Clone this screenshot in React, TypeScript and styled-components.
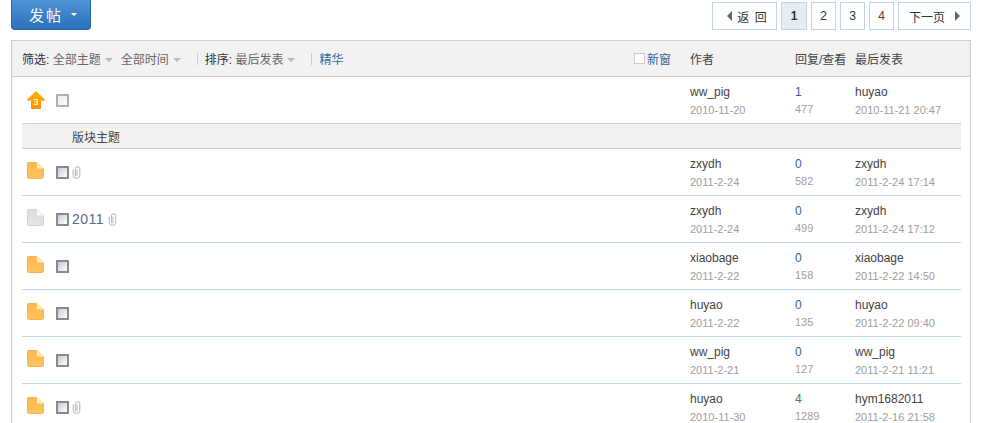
import styled, { createGlobalStyle } from "styled-components";

const GlobalStyle = createGlobalStyle`
    html, body {
        margin: 0;
        padding: 0;
        background: #fff;
        overflow: hidden;
    }
    body {
        font-family: "Liberation Sans", "Noto Sans CJK SC", sans-serif;
        font-size: 12px;
        color: #444;
    }
`;

const Page = styled.div`
    width: 984px;
    height: 423px;
    overflow: hidden;
    padding: 0 13px 0 11px;
    box-sizing: border-box;
`;

const TopBar = styled.div`
    display: flex;
    justify-content: space-between;
    height: 40px;
`;

const PostButton = styled.a`
    display: flex;
    align-items: center;
    box-sizing: border-box;
    width: 80px;
    height: 30px;
    padding-left: 17px;
    gap: 8px;
    color: #fff;
    font-size: 15px;
    letter-spacing: 2px;
    background: linear-gradient(#4f95d6, #2a70bd);
    border: 1px solid #2b66a8;
    border-top: 0;
    border-radius: 0 0 4px 4px;
`;

const Caret = styled.span<{ $color: string }>`
    width: 0;
    height: 0;
    border-left: 3px solid transparent;
    border-right: 3px solid transparent;
    border-top: 3px solid ${({ $color }) => $color};
`;

const CaretLarge = styled.span`
    width: 0;
    height: 0;
    margin-left: 4px;
    margin-top: 2px;
    border-left: 4px solid transparent;
    border-right: 4px solid transparent;
    border-top: 4px solid #bbb;
`;

const Pager = styled.div`
    display: flex;
    gap: 4px;
    padding-top: 2px;
`;

const PageLink = styled.a<{ $width: number; $active?: boolean; $color?: string }>`
    display: flex;
    align-items: center;
    justify-content: center;
    gap: 5px;
    box-sizing: border-box;
    width: ${({ $width }) => $width}px;
    height: 28px;
    border: 1px solid #c2d5e3;
    background: ${({ $active }) => ($active ? "#e5edf2" : "#fff")};
    font-size: 12px;
    font-weight: ${({ $active }) => ($active ? 700 : 400)};
    color: ${({ $color }) => $color ?? "#333"};
`;

const BackLabel = styled.span`
    letter-spacing: 1px;
`;

const ArrowLeft = styled.span`
    width: 0;
    height: 0;
    margin-left: 6px;
    border-top: 5px solid transparent;
    border-bottom: 5px solid transparent;
    border-right: 5px solid #666;
`;

const ArrowRight = styled.span`
    width: 0;
    height: 0;
    margin-left: 5px;
    border-top: 5px solid transparent;
    border-bottom: 5px solid transparent;
    border-left: 5px solid #666;
`;

const Board = styled.div`
    border: 1px solid #cdcdcd;
    border-bottom: 0;
`;

const HeaderBar = styled.div`
    display: flex;
    align-items: center;
    height: 35px;
    padding: 0 9px 0 10px;
    background: #f2f2f2;
    border-bottom: 1px solid #cdcdcd;
`;

const Filters = styled.div`
    flex: 1;
    display: flex;
    align-items: center;
    color: #666;
`;

const FilterLabel = styled.span`
    color: #333;
`;

const FilterItem = styled.span<{ $gap?: number }>`
    display: flex;
    align-items: center;
    margin-right: ${({ $gap }) => $gap ?? 8}px;
`;

const Divider = styled.span<{ $gap: number }>`
    width: 1px;
    height: 12px;
    background: #ccc;
    margin: 0 7px 0 ${({ $gap }) => $gap}px;
`;

const BlueLink = styled.a`
    color: #369;
`;

const NewWindow = styled.label`
    display: flex;
    align-items: center;
    gap: 2px;
    width: 56px;
    color: #369;
`;

const SmallBox = styled.span`
    box-sizing: border-box;
    width: 11px;
    height: 11px;
    border: 1px solid #ccc;
    background: #fff;
`;

const HeaderCell = styled.div<{ $width: number }>`
    width: ${({ $width }) => $width}px;
    color: #444;
`;

const Row = styled.div<{ $height?: number; $ruled?: boolean }>`
    display: flex;
    align-items: center;
    height: ${({ $height }) => $height ?? 47}px;
    box-sizing: border-box;
    margin: 0 9px 0 10px;
    border-bottom: ${({ $ruled }) => ($ruled === false ? "0" : "1px solid #c2d5e3")};
`;

const SectionRow = styled.div`
    display: flex;
    align-items: center;
    box-sizing: border-box;
    height: 26px;
    margin: 0 9px 0 10px;
    padding-left: 50px;
    background: #f2f2f2;
    border-top: 1px solid #c2d5e3;
    border-bottom: 1px solid #cdcdcd;
    color: #444;
`;

const IconCell = styled.div<{ $lift?: number }>`
    display: flex;
    width: 34px;
    height: 18px;
    margin-bottom: ${({ $lift }) => $lift ?? 0}px;
    padding-left: 5px;
    box-sizing: border-box;
`;

const TitleCell = styled.div`
    flex: 1;
    display: flex;
    align-items: center;
    gap: 3px;
`;

const Check = styled.span<{ $dark?: boolean }>`
    box-sizing: border-box;
    width: 13px;
    height: 13px;
    border: 2px solid ${({ $dark }) => ($dark ? "#8a8a8a" : "#b0b0b0")};
    background: ${({ $dark }) =>
        $dark ? "linear-gradient(135deg, #c3cad6, #ffffff)" : "linear-gradient(135deg, #e9ecee, #ffffff)"};
`;

const TitleText = styled.a`
    font-size: 14px;
    letter-spacing: 0.5px;
    color: #5a6b80;
    margin-right: 1px;
`;

const StackCell = styled.div<{ $width: number }>`
    width: ${({ $width }) => $width}px;
    display: flex;
    flex-direction: column;
    gap: 4px;
    padding-top: 1px;
`;

const Name = styled.a`
    font-size: 12px;
    line-height: 14px;
    color: #444;
`;

const Small = styled.span`
    font-size: 11px;
    line-height: 14px;
    color: #a0a0a0;
`;

const Views = styled(Small)`
    margin: -1px 0 1px;
`;

const Replies = styled.a<{ $color: string }>`
    font-size: 12px;
    line-height: 14px;
    color: ${({ $color }) => $color};
`;

const FolderIcon = ({ gray }: { gray?: boolean }) => (
    <svg width="17" height="17" viewBox="0 0 18 18">
        <defs>
            <linearGradient id={gray ? "fg" : "fo"} x1="0" y1="0" x2="0" y2="1">
                <stop offset="0" stopColor={gray ? "#dcdcdc" : "#ffb84d"} />
                <stop offset="1" stopColor={gray ? "#e6e6e6" : "#ffc35f"} />
            </linearGradient>
        </defs>
        <path
            d="M1.5 0.5H10L17.5 7V15.5Q17.5 17.5 15.5 17.5H2.5Q0.5 17.5 0.5 15.5V1.5Q0.5 0.5 1.5 0.5Z"
            fill={`url(#${gray ? "fg" : "fo"})`}
            stroke={gray ? "#d0d0d0" : "#f5b04a"}
        />
        <path d="M10.5 0.5L17.5 7H11.5Q10.5 7 10.5 6Z" fill={gray ? "#fafafa" : "#ffeec4"} />
    </svg>
);

const UpIcon = () => (
    <svg width="18" height="18" viewBox="0 0 18 18">
        <defs>
            <linearGradient id="up" x1="0" y1="0" x2="0" y2="1">
                <stop offset="0" stopColor="#ffb400" />
                <stop offset="1" stopColor="#fb8c00" />
            </linearGradient>
        </defs>
        <path d="M9 0L18 8.5V9.5H14V17Q14 18 13 18H5Q4 18 4 17V9.5H0V8.5Z" fill="url(#up)" />
        <path d="M6.5 8H11V14H6.5V12.8H9.8V11.6H7.5V10.4H9.8V9.2H6.5Z" fill="#ffe9bf" />
    </svg>
);

const ClipIcon = () => (
    <svg width="9" height="13" viewBox="0 0 9 13" fill="none" stroke="#b4b4b4" strokeWidth="1">
        <path d="M5 3.5V9Q5 10 4.2 10Q3.4 10 3.4 9V2.5Q3.4 0.8 5.5 0.8Q7.8 0.8 7.8 2.5V9.5Q7.8 12.3 4.5 12.3Q1.2 12.3 1.2 9.5V3.5" />
    </svg>
);

interface Topic {
    title?: string;
    clip?: boolean;
    gray?: boolean;
    author: string;
    date: string;
    replies: number;
    replyColor?: string;
    views: number;
    last: string;
    lastDate: string;
}

const topics: Topic[] = [
    { clip: true, author: "zxydh", date: "2011-2-24", replies: 0, views: 582, last: "zxydh", lastDate: "2011-2-24 17:14" },
    { title: "2011", clip: true, gray: true, author: "zxydh", date: "2011-2-24", replies: 0, views: 499, last: "zxydh", lastDate: "2011-2-24 17:12" },
    { author: "xiaobage", date: "2011-2-22", replies: 0, views: 158, last: "xiaobage", lastDate: "2011-2-22 14:50" },
    { author: "huyao", date: "2011-2-22", replies: 0, views: 135, last: "huyao", lastDate: "2011-2-22 09:40" },
    { author: "ww_pig", date: "2011-2-21", replies: 0, views: 127, last: "ww_pig", lastDate: "2011-2-21 11:21" },
    { clip: true, author: "huyao", date: "2010-11-30", replies: 4, replyColor: "#3a7a66", views: 1289, last: "hym1682011", lastDate: "2011-2-16 21:58" },
];

const Columns = ({ t }: { t: Topic }) => (
    <>
        <StackCell $width={105}>
            <Name>{t.author}</Name>
            <Small>{t.date}</Small>
        </StackCell>
        <StackCell $width={60}>
            <Replies $color={t.replyColor ?? "#369"}>{t.replies}</Replies>
            <Views>{t.views}</Views>
        </StackCell>
        <StackCell $width={106}>
            <Name>{t.last}</Name>
            <Small>{t.lastDate}</Small>
        </StackCell>
    </>
);

export default function App() {
    return (
        <Page>
            <GlobalStyle />
            <TopBar>
                <PostButton>
                    发帖
                    <Caret $color="#fff" />
                </PostButton>
                <Pager>
                    <PageLink $width={65}>
                        <ArrowLeft />
                        <BackLabel>返 回</BackLabel>
                    </PageLink>
                    <PageLink $width={26} $active>1</PageLink>
                    <PageLink $width={25}>2</PageLink>
                    <PageLink $width={25}>3</PageLink>
                    <PageLink $width={25} $color="#633">4</PageLink>
                    <PageLink $width={73}>
                        下一页
                        <ArrowRight />
                    </PageLink>
                </Pager>
            </TopBar>
            <Board>
                <HeaderBar>
                    <Filters>
                        <FilterLabel>筛选:</FilterLabel>&nbsp;
                        <FilterItem>全部主题<CaretLarge /></FilterItem>
                        <FilterItem>全部时间<CaretLarge /></FilterItem>
                        <Divider $gap={8} />
                        <FilterLabel>排序:</FilterLabel>&nbsp;
                        <FilterItem $gap={0}>最后发表<CaretLarge /></FilterItem>
                        <Divider $gap={16} />
                        <BlueLink>精华</BlueLink>
                    </Filters>
                    <NewWindow>
                        <SmallBox />
                        新窗
                    </NewWindow>
                    <HeaderCell $width={105}>作者</HeaderCell>
                    <HeaderCell $width={60}>回复/查看</HeaderCell>
                    <HeaderCell $width={106}>最后发表</HeaderCell>
                </HeaderBar>
                <Row $height={46} $ruled={false}>
                    <IconCell>
                        <UpIcon />
                    </IconCell>
                    <TitleCell>
                        <Check />
                    </TitleCell>
                    <Columns
                        t={{
                            author: "ww_pig",
                            date: "2010-11-20",
                            replies: 1,
                            replyColor: "#4a4a9a",
                            views: 477,
                            last: "huyao",
                            lastDate: "2010-11-21 20:47",
                        }}
                    />
                </Row>
                <SectionRow>版块主题</SectionRow>
                {topics.map((t) => (
                    <Row key={t.lastDate}>
                        <IconCell $lift={2}>
                            <FolderIcon gray={t.gray} />
                        </IconCell>
                        <TitleCell>
                            <Check $dark />
                            {t.title && <TitleText>{t.title}</TitleText>}
                            {t.clip && <ClipIcon />}
                        </TitleCell>
                        <Columns t={t} />
                    </Row>
                ))}
            </Board>
        </Page>
    );
}
